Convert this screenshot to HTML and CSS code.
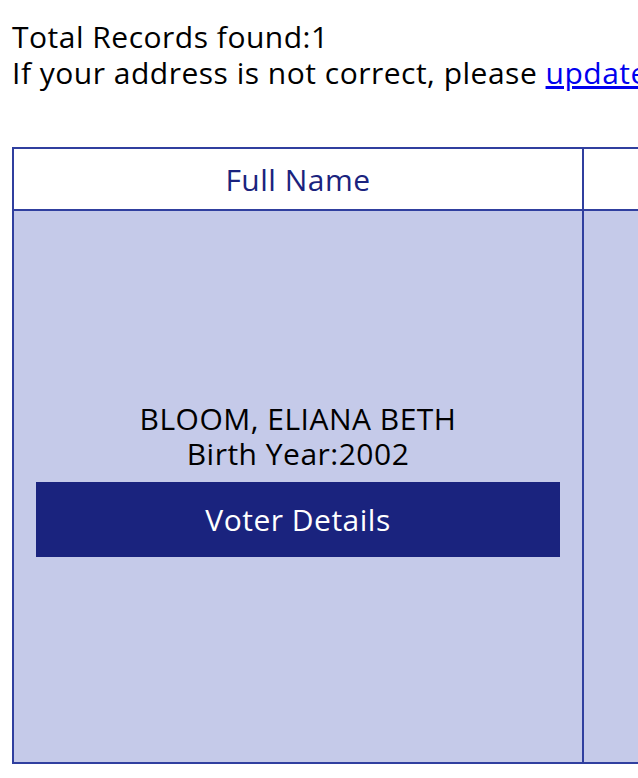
FILE: index.html
```html
<!DOCTYPE html>
<html lang="en">
<head>
    <meta charset="UTF-8">
    <meta name="viewport" content="width=device-width, initial-scale=1.0">
    <title>Voter Search Results</title>
    <link rel="stylesheet" href="styles.css">
</head>
<body>
<div id="results">
    <div class="summary">
        <p>Total Records found:1</p>
        <p>If your address is not correct, please <a href="#">update your registration</a>.</p>
    </div>
    <table class="voters">
        <colgroup>
            <col class="col-name">
            <col class="col-address">
        </colgroup>
        <thead>
            <tr>
                <th>Full Name</th>
                <th>Residential Address</th>
            </tr>
        </thead>
        <tbody>
            <tr>
                <td>
                    <div class="voter-name">BLOOM, ELIANA BETH</div>
                    <div class="voter-year">Birth Year:2002</div>
                    <button class="details-btn">Voter Details</button>
                </td>
                <td></td>
            </tr>
        </tbody>
    </table>
</div>
</body>
</html>
```

FILE: styles.css
```css
body { margin: 0; font-family: "Open Sans", Arial, sans-serif; color: #000; background: #fff; letter-spacing: 0.5px; }
#results { padding: 19px 12px 16px 12px; width: 1100px; }
.summary p { margin: 0; font-size: 30px; line-height: 36px; white-space: nowrap; }
.summary a { color: #0000ee; }
.voters { margin-top: 56px; border-collapse: collapse; table-layout: fixed; width: 1000px; border: 2px solid #303f9f; }
.col-name { width: 570px; }
.voters th, .voters td { border: 2px solid #303f9f; text-align: center; }
.voters th { height: 60px; padding: 0; font-size: 30px; font-weight: normal; color: #1a237e; background: #fff; }
.voters td { height: 535px; background: #c5cae9; vertical-align: middle; padding: 0 22px 16px 22px; font-size: 30px; line-height: 35px; }
.details-btn { display: block; width: 100%; height: 75px; margin: 11px 0 0 0; border: none; background: #1a237e; color: #fff; font-family: inherit; font-size: 30px; letter-spacing: 0.5px; cursor: pointer; }
```
